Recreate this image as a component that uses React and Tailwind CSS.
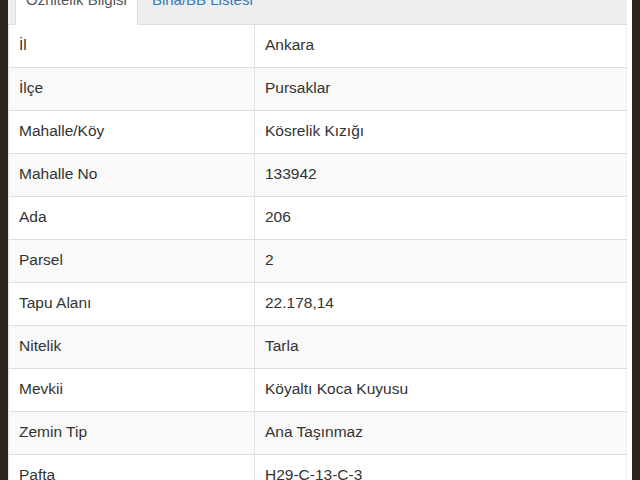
import React from "react";

const rows = [
  ["İl", "Ankara"],
  ["İlçe", "Pursaklar"],
  ["Mahalle/Köy", "Kösrelik Kızığı"],
  ["Mahalle No", "133942"],
  ["Ada", "206"],
  ["Parsel", "2"],
  ["Tapu Alanı", "22.178,14"],
  ["Nitelik", "Tarla"],
  ["Mevkii", "Köyaltı Koca Kuyusu"],
  ["Zemin Tip", "Ana Taşınmaz"],
  ["Pafta", "H29-C-13-C-3"],
];

export default function App() {
  return (
    <div
      className="w-[640px] h-[480px] overflow-hidden flex bg-[#2a2521] text-[#333]"
      style={{ fontFamily: '"Liberation Sans", Arial, sans-serif' }}
    >
      <div className="w-[8px] shrink-0 bg-[#2a2521]" />
      <div className="w-[624px] shrink-0 bg-white pr-[5px] overflow-hidden">
        <div className="flex bg-[#eeeeee] border-b border-[#dddddd] mt-[-22px] pl-[7px] h-[47px]">
          <div className="bg-white border-x border-[#dddddd] px-[10px] pt-[10px] h-[47px] leading-[23px] text-[15px] text-[#555] mb-[-1px]">
            Öznitelik Bilgisi
          </div>
          <div className="px-[14px] pt-[10px] leading-[23px] text-[15px] text-[#337ab7]">
            Bina/BB Listesi
          </div>
        </div>
        <div className="border-l border-[#e3e3e3]">
          {rows.map(([k, v], i) => (
            <div
              key={k}
              className={`flex h-[43px] border-b border-[#dddddd] text-[15.5px] leading-[23px] ${
                i % 2 === 1 ? "bg-[#f9f9f9]" : "bg-white"
              }`}
            >
              <div className="w-[246px] shrink-0 pl-[10px] pb-[3px] flex items-center border-r border-[#e3e3e3]">
                {k}
              </div>
              <div className="flex-1 pl-[10px] pb-[3px] flex items-center border-r border-[#eeeeee]">
                {v}
              </div>
            </div>
          ))}
        </div>
      </div>
      <div className="w-[8px] shrink-0 bg-[#2a2521]" />
    </div>
  );
}
